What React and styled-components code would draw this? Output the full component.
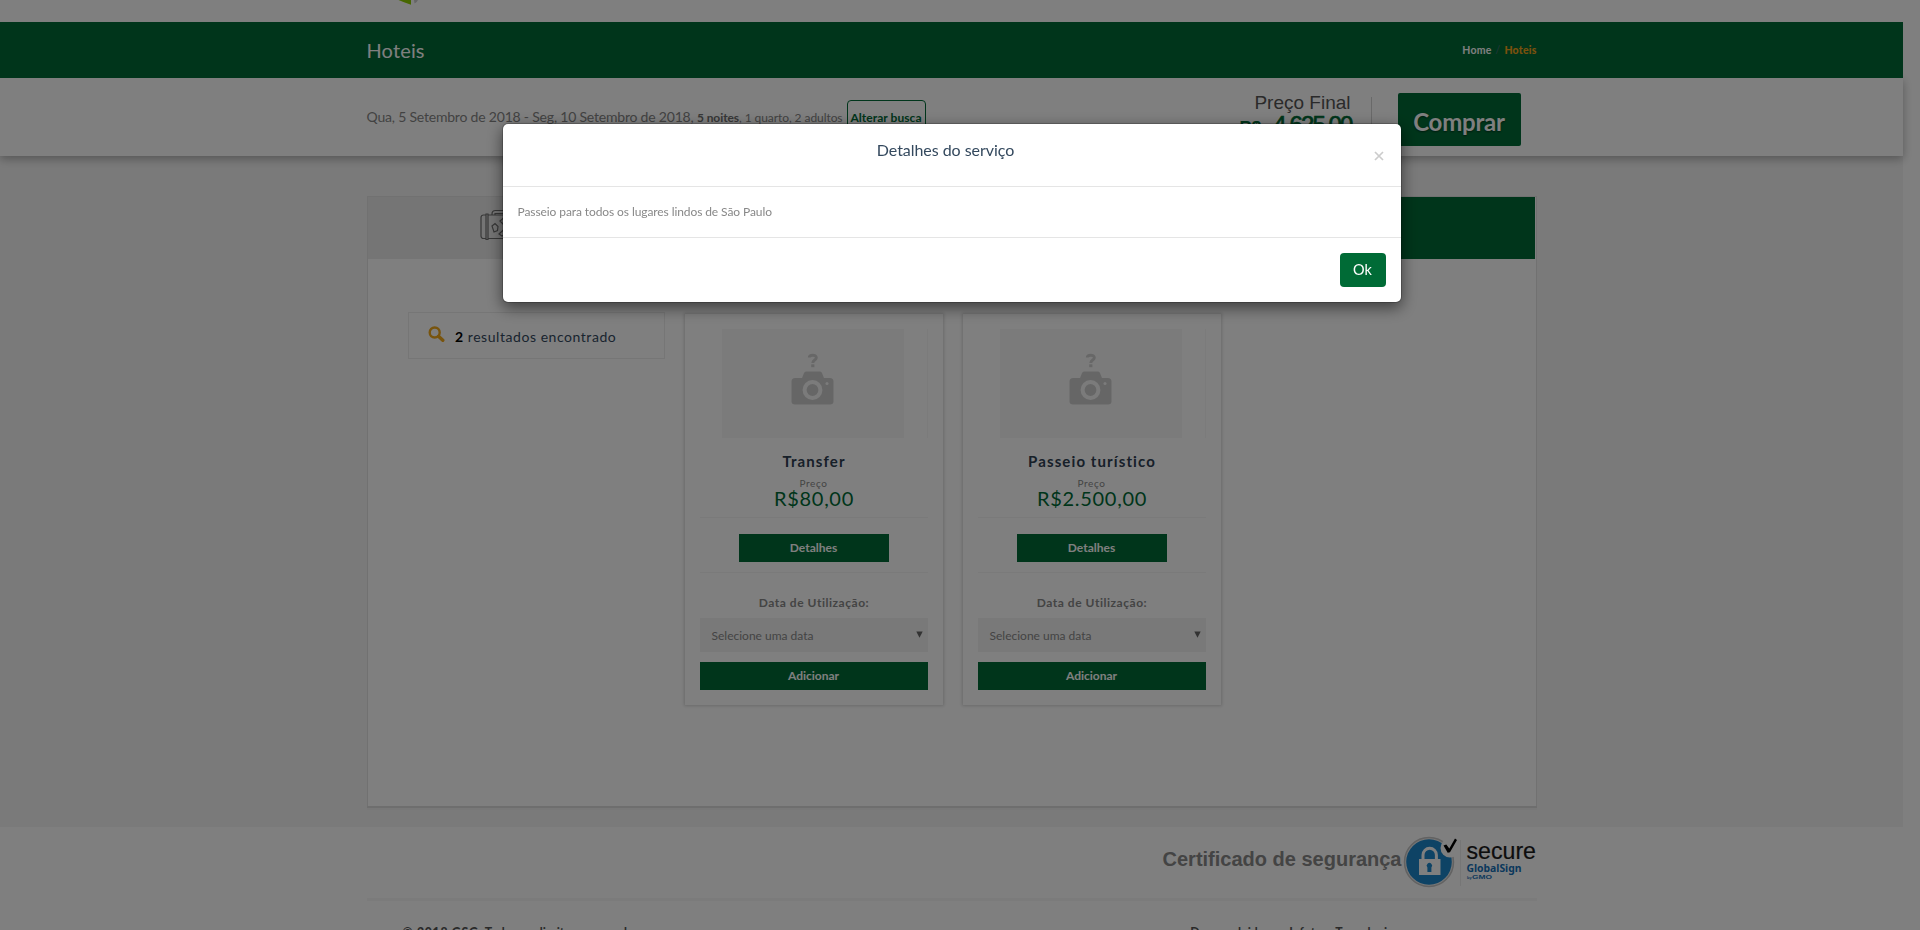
import React from "react";
import styled, { createGlobalStyle, css } from "styled-components";

const green = "#006b36";

const GlobalStyle = createGlobalStyle`
  * { box-sizing: border-box; }
  html, body { margin: 0; padding: 0; height: 100%; overflow: hidden; background: #fff; }
  body { font-family: Lato, "Liberation Sans", sans-serif; font-size: 12px; color: #888; }
  button { font-family: inherit; margin: 0; cursor: pointer; }
`;

const Page = styled.div`
  height: 930px;
  overflow: hidden;
  padding-right: 17px;
  display: flex;
  flex-direction: column;
`;

const Container = styled.div`
  width: 1170px;
  margin: 0 auto;
`;

const Header = styled.header`
  height: 22px;
  flex: none;
  svg { display: block; margin-left: 27px; }
`;

const TitleBar = styled.div`
  height: 56px;
  flex: none;
  background: ${green};
  color: #fff;
  position: relative;
  z-index: 2;
`;

const TitleRow = styled(Container)`
  height: 56px;
  display: flex;
  justify-content: space-between;
  align-items: center;
`;

const PageTitle = styled.h1`
  margin: 0;
  padding-bottom: 1px;
  font-size: 20px;
  font-weight: 400;
  line-height: 24px;
  letter-spacing: 0.15px;
`;

const Breadcrumb = styled.nav`
  display: flex;
  gap: 4px;
  font-size: 10.5px;
  font-weight: 700;
  line-height: 16px;
  letter-spacing: 0.2px;
  i { font-style: normal; font-weight: 400; color: #4b6a7a; }
  b { color: #f5a31a; }
`;

const SearchBar = styled.div`
  height: 78px;
  flex: none;
  background: #fff;
  box-shadow: 0 3px 9px rgba(0, 0, 0, 0.3);
  position: relative;
  z-index: 1;
`;

const SearchRow = styled(Container)`
  display: flex;
  justify-content: space-between;
  align-items: flex-start;
`;

const Summary = styled.div`
  display: flex;
  align-items: baseline;
  padding-top: 22px;
  white-space: pre;
  color: #858585;
  font-size: 12px;
  line-height: 14px;
  letter-spacing: -0.07px;
  b { color: #707070; }
`;

const Dates = styled.span`
  font-size: 14px;
  letter-spacing: -0.2px;
`;

const ChangeButton = styled.button`
  height: 36px;
  width: 79px;
  padding: 0 0 2px;
  margin-left: 4px;
  border: 1px solid ${green};
  border-radius: 4px;
  background: transparent;
  color: ${green};
  font-size: 12px;
  font-weight: 700;
  letter-spacing: 0.05px;
`;

const Checkout = styled.div`
  display: flex;
  padding: 15px 16px 0 0;
`;

const Price = styled.div`
  width: 130px;
  margin-top: 4px;
  padding-right: 20px;
  border-right: 1px solid #d2d2d2;
  height: 42px;
  text-align: right;
  font-family: "Liberation Sans", Arial, sans-serif;
  color: #555;
  font-size: 19px;
  line-height: 12px;
  margin-right: 26px;
`;

const Total = styled.div`
  color: ${green};
  font-weight: 400;
  font-size: 24px;
  letter-spacing: -1.9px;
  line-height: 24px;
  margin: 4px -1px 0 -20px;
  white-space: nowrap;
  -webkit-text-stroke: 0.7px ${green};
  small { font-size: 17px; letter-spacing: 0; margin-right: 12px; font-weight: 700; -webkit-text-stroke: 0; }
`;

const BuyButton = styled.button`
  width: 123px;
  height: 53px;
  padding: 3px 0 0;
  border: 0;
  border-radius: 2px;
  background: ${green};
  color: #fff;
  font-size: 24px;
  font-weight: 700;
  letter-spacing: -0.2px;
  text-shadow: 0 1px 2px rgba(0, 0, 0, 0.5);
`;

const Main = styled.main`
  height: 671px;
  flex: none;
  background: #f5f5f5;
  padding-top: 40px;
`;

const Panel = styled(Container)`
  height: 610px;
  border: 1px solid #e2e2e2;
  border-width: 1px 1px 0;
  background: #fff;
  box-shadow: 0 2px 0 #dcdcdc, 0 4px 0 #f0f0f0;
`;

const Tabs = styled.div`
  display: flex;
  height: 62px;
`;

const Tab = styled.div`
  flex: 1;
  background: ${(p) => (p.$active ? green : "#ebebeb")};
  padding: 12px 0 0 112px;
  margin-right: ${(p) => (p.$active ? "1px" : "0")};
`;

const Results = styled.div`
  display: flex;
  align-items: flex-start;
  padding: 53px 0 0 40px;
`;

const ResultCount = styled.div`
  display: flex;
  width: 257px;
  height: 47px;
  border: 1px solid #ececec;
  padding: 13px 0 0 19px;
  color: #34495e;
  font-size: 14px;
  line-height: 22px;
  letter-spacing: 0.55px;
  svg { margin: 0 10.5px 0 0; }
  b { color: #000; }
`;

const Cards = styled.div`
  display: flex;
  gap: 20px;
  margin: 2px 0 0 20px;
`;

const Card = styled.article`
  width: 258px;
  height: 391px;
  padding: 15px 15px 0;
  background: #fff;
  box-shadow: 0 0 3px 1px rgba(0, 0, 0, 0.17);
  text-align: center;
`;

const Photo = styled.div`
  height: 109px;
  border-right: 1px solid #f6f6f6;
  padding-left: 22px;
  svg { display: block; }
`;

const CardTitle = styled.h2`
  margin: 12px 0 0 1px;
  font-size: 15px;
  line-height: 22px;
  font-weight: 700;
  letter-spacing: 1.1px;
  color: #2f4052;
`;

const PriceLabel = styled.div`
  font-size: 10px;
  line-height: 12px;
  margin-top: 5px;
  letter-spacing: 0.6px;
`;

const CardPrice = styled.div`
  font-size: 20px;
  line-height: 18px;
  height: 29px;
  letter-spacing: 0.7px;
  padding-left: 1px;
  color: ${green};
  border-bottom: 1px solid #f4f4f4;
`;

const Action = styled.button`
  display: block;
  width: ${(p) => (p.$wide ? "100%" : "150px")};
  height: 28px;
  margin: 0 auto;
  padding: 0 0 2px;
  border: 0;
  background: ${green};
  color: #fff;
  font-size: 12px;
  font-weight: 700;
`;

const DetailsRow = styled.div`
  padding: 16px 0 10px;
  border-bottom: 1px solid #f4f4f4;
`;

const DateLabel = styled.div`
  margin: 22px 0 7px 1px;
  font-size: 12px;
  line-height: 16px;
  font-weight: 700;
  letter-spacing: 0.53px;
`;

const DateSelect = styled.div`
  height: 34px;
  display: flex;
  justify-content: space-between;
  align-items: center;
  padding: 0 5px 0 12px;
  margin-bottom: 10px;
  background: #f3f3f3;
  color: #888;
  svg { margin-top: -2px; }
`;

const Footer = styled.footer`
  height: 103px;
  flex: none;
`;

const Certificate = styled(Container)`
  display: flex;
  justify-content: flex-end;
  height: 74px;
  border-bottom: 3px solid #f6f6f6;
  font: 700 20px/24px "Liberation Sans", Arial, sans-serif;
  span { margin-top: 20px; }
  svg { margin: 9px 0 0 1px; display: block; }
`;

const Credits = styled(Container)`
  display: flex;
  justify-content: space-between;
  align-items: baseline;
  padding: 23px 143px 0 36px;
  font-size: 12.3px;
  line-height: 18px;
  font-weight: 700;
  color: #555;
  white-space: nowrap;
  b { letter-spacing: 0.7px; }
`;

const Backdrop = styled.div`
  position: fixed;
  inset: 0;
  z-index: 10;
  background: rgba(0, 0, 0, 0.5);
  padding: 123px 17px 0 0;
`;

const Dialog = styled.section`
  width: 900px;
  height: 180px;
  margin: 0 auto;
  background: #fff;
  background-clip: padding-box;
  border: 1px solid rgba(0, 0, 0, 0.2);
  border-radius: 6px;
  box-shadow: 0 5px 15px rgba(0, 0, 0, 0.5);
`;

const rule = css`border-bottom: 1px solid #e5e5e5;`;

const DialogHeader = styled.div`
  display: flex;
  height: 63px;
  padding: 14px 15px 0;
  ${rule}
  h3 {
    flex: 1;
    margin: 0;
    text-align: center;
    color: #34495e;
    font-size: 16px;
    line-height: 24px;
    font-weight: 400;
    letter-spacing: -0.05px;
  }
  svg { margin: 13px 2px 0 0; }
`;

const DialogBody = styled.div`
  height: 51px;
  padding: 15px;
  line-height: 19px;
  letter-spacing: -0.09px;
  ${rule}
`;

const DialogFooter = styled.div`
  display: flex;
  justify-content: flex-end;
  padding: 15px;
`;

const OkButton = styled.button`
  width: 46px;
  height: 34px;
  padding: 0 0 1px;
  border: 0;
  border-radius: 4px;
  background: ${green};
  color: #fff;
  font-size: 14.5px;
`;

const Suitcase = () => (
  <svg width="46" height="34" viewBox="0 0 46 34" fill="none" stroke="#707070" strokeWidth="1.2">
    <path d="M6 6H3.500A2.500 2.500 0 0 0 1 8.500V27a2.500 2.500 0 0 0 2.500 2.500H6M6 5h2v25.500H6zM8 6h36v23.500H8M12 6V5a3.500 3.500 0 0 1 3.500-3.500H25M15 6V4.500h10" />
    <path d="M12 17l3-2.500 3 3-.5 4-3.500 1.500zM20 12l3-2.500 4 1v4l-4 .5zM19 25l5-4.500 4 .5-2 4-4 2z" />
  </svg>
);

const NoPhoto = () => (
  <svg width="182" height="109" viewBox="0 0 182 109">
    <path d="M0 0h182v109H0z" fill="#f7f7f7" />
    <path d="M87.300 28.500c0-3 7-3.400 7 .3 0 2.400-3.500 2.200-3.500 5.200" fill="none" stroke="#cfcfcf" strokeWidth="3" />
    <path d="M89.200 35.300h3.200v2.900h-3.200z" fill="#cfcfcf" />
    <path d="M73 49h7l2-5q.6-1.500 2-1.500h14q1.500 0 2 1.500l2 5h6q3.500 0 3.500 3.500v20q0 3-3.500 3H73q-3.500 0-3.500-3v-20Q69.500 49 73 49z" fill="#cdcdcd" />
    <circle cx="90.500" cy="61" r="7.900" fill="#cdcdcd" stroke="#f7f7f7" strokeWidth="4" />
    <circle cx="105" cy="54.500" r="1.500" fill="#f7f7f7" />
  </svg>
);

const SearchIcon = () => (
  <svg width="17" height="17" viewBox="0 0 17 17" fill="none" stroke="#f0a81a">
    <circle cx="6.700" cy="6.500" r="5" strokeWidth="2.400" />
    <path d="M10.500 10.300l4.300 4" strokeWidth="3.400" strokeLinecap="round" />
  </svg>
);

const SecureSeal = () => (
  <svg width="134" height="54" viewBox="0 0 134 54">
    <circle cx="26" cy="26" r="24.500" fill="#eee" stroke="#c4c4c4" strokeWidth="1.500" />
    <circle cx="26" cy="26" r="22.800" fill="#1d87cb" />
    <circle cx="47" cy="12" r="9.500" fill="#fff" />
    <path d="M40.500 9.500l2.800-1 3 4L52 2.500l2 1.500-7 12.300-2.300.5z" fill="#000" />
    <path d="M16 23h21.500v16H16z" fill="#fff" />
    <path d="M20 23v-4a6.700 6.700 0 0 1 13.400 0v4" fill="none" stroke="#fff" strokeWidth="3" />
    <path d="M24.400 31.500a2.700 2.700 0 1 1 4 0V36h-4z" fill="#1d87cb" />
    <path d="M57.500 4v46" stroke="#ececec" />
    <text x="63.500" y="22.700" textLength="69.500" lengthAdjust="spacingAndGlyphs" fontFamily="Liberation Sans, sans-serif" fontWeight="400" fontSize="23.500" fill="#1a1a1a" stroke="#1a1a1a" strokeWidth=".2">secure</text>
    <text x="63.500" y="35.700" textLength="55" lengthAdjust="spacingAndGlyphs" fontFamily="Noto Sans, sans-serif" fontWeight="700" fontSize="10.500" fill="#1570b8">GlobalSign</text>
    <text x="64" y="43.200" fontFamily="Liberation Sans, sans-serif" fontWeight="700" fontSize="4" fill="#1570b8">by</text>
    <text x="69" y="43.200" textLength="20" lengthAdjust="spacingAndGlyphs" fontFamily="Liberation Sans, sans-serif" fontWeight="700" fontSize="6" fill="#1570b8">GMO</text>
  </svg>
);

const services = [
  { name: "Transfer", price: "R$80,00" },
  { name: "Passeio turístico", price: "R$2.500,00" },
];

const ServiceCard = ({ name, price }) => (
  <Card>
    <Photo><NoPhoto /></Photo>
    <CardTitle>{name}</CardTitle>
    <PriceLabel>Preço</PriceLabel>
    <CardPrice>{price}</CardPrice>
    <DetailsRow><Action>Detalhes</Action></DetailsRow>
    <DateLabel>Data de Utilização:</DateLabel>
    <DateSelect>
      Selecione uma data
      <svg width="7" height="7" viewBox="0 0 7 7"><path d="M.3.5h6.400L3.500 6.700z" fill="#666" /></svg>
    </DateSelect>
    <Action $wide>Adicionar</Action>
  </Card>
);

export default function App() {
  return (
    <>
      <GlobalStyle />
      <Page>
        <Header>
          <Container>
            <svg width="30" height="8" viewBox="0 0 30 8">
              <path d="M4.500 0H17v4.700Q10 2.500 4.500 0z" fill="#8fce00" />
              <path d="M20 0h4q-1 2.500-3.500 3.500z" fill="#ccc" />
            </svg>
          </Container>
        </Header>
        <TitleBar>
          <TitleRow>
            <PageTitle>Hoteis</PageTitle>
            <Breadcrumb><span>Home</span><i>/</i><b>Hoteis</b></Breadcrumb>
          </TitleRow>
        </TitleBar>
        <SearchBar>
          <SearchRow>
            <Summary>
              <Dates>Qua, 5 Setembro de 2018 - Seg, 10 Setembro de 2018, </Dates>
              <b>5 noites</b>, 1 quarto, 2 adultos
              <ChangeButton>Alterar busca</ChangeButton>
            </Summary>
            <Checkout>
              <Price>
                Preço Final
                <Total><small>R$</small>4.625,00</Total>
              </Price>
              <BuyButton>Comprar</BuyButton>
            </Checkout>
          </SearchRow>
        </SearchBar>
        <Main>
          <Panel>
            <Tabs>
              <Tab><Suitcase /></Tab>
              <Tab $active />
            </Tabs>
            <Results>
              <ResultCount><SearchIcon /><span><b>2</b> resultados encontrado</span></ResultCount>
              <Cards>
                {services.map((s) => <ServiceCard key={s.name} {...s} />)}
              </Cards>
            </Results>
          </Panel>
        </Main>
        <Footer>
          <Certificate><span>Certificado de segurança</span><SecureSeal /></Certificate>
          <Credits>
            <span><b>© 2018 GSG.</b> Todos os direitos reservados.</span>
            <span>Desenvolvido por Infotera Tecnologia</span>
          </Credits>
        </Footer>
      </Page>
      <Backdrop>
        <Dialog>
          <DialogHeader>
            <h3>Detalhes do serviço</h3>
            <svg width="10" height="10" viewBox="0 0 10 10" stroke="#ccc" strokeWidth="1.700"><path d="M1 1l8 8M9 1L1 9" /></svg>
          </DialogHeader>
          <DialogBody>Passeio para todos os lugares lindos de São Paulo</DialogBody>
          <DialogFooter><OkButton>Ok</OkButton></DialogFooter>
        </Dialog>
      </Backdrop>
    </>
  );
}
